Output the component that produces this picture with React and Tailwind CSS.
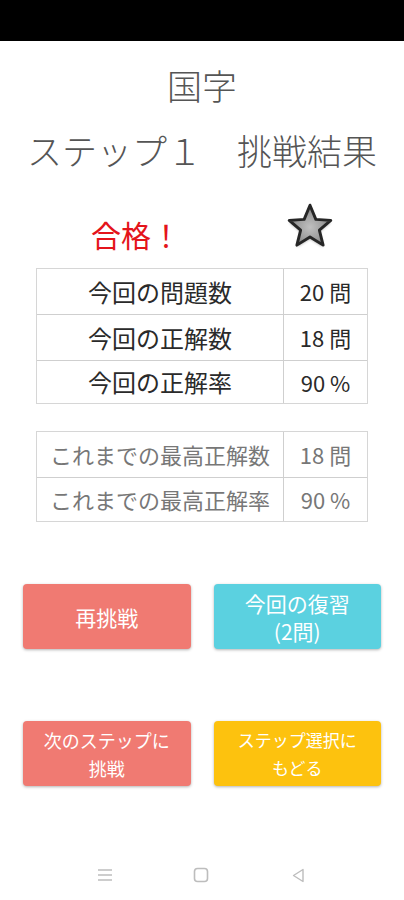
import React from 'react';

const font = { fontFamily: '"Noto Sans CJK JP", "Noto Sans", sans-serif' };

const Star = () => (
  <svg width="52" height="50" viewBox="0 0 50 48">
    <defs>
      <radialGradient id="sg" cx="50%" cy="55%" r="55%">
        <stop offset="0%" stopColor="#c0c0c0" />
        <stop offset="60%" stopColor="#9c9c9c" />
        <stop offset="100%" stopColor="#707070" />
      </radialGradient>
      <filter id="sh" x="-20%" y="-20%" width="140%" height="140%">
        <feGaussianBlur stdDeviation="1.3" />
      </filter>
    </defs>
    <path
      d="M25 4 L30.6 17.6 L45 18.6 L34 28 L37.6 42.4 L25 34.6 L12.4 42.4 L16 28 L5 18.6 L19.4 17.6 Z"
      fill="#000"
      opacity="0.4"
      filter="url(#sh)"
      transform="translate(0 1.5)"
    />
    <path
      d="M25 4 L30.6 17.6 L45 18.6 L34 28 L37.6 42.4 L25 34.6 L12.4 42.4 L16 28 L5 18.6 L19.4 17.6 Z"
      fill="url(#sg)"
      stroke="#262626"
      strokeWidth="2.8"
      strokeLinejoin="round"
    />
  </svg>
);

const Row = ({ label, value, h, last }) => (
  <div className={`flex ${h} ${last ? '' : 'border-b border-[#cfcfcf]'}`}>
    <div className="w-[247px] flex items-center justify-center border-r border-[#cfcfcf]">{label}</div>
    <div className="flex-1 flex items-center justify-center text-[22px]">{value}</div>
  </div>
);

const Btn = ({ color, size, children }) => (
  <div
    className={`w-[168px] h-[65px] rounded-[4px] ${color} shadow-[0_1px_3px_rgba(0,0,0,0.3)] flex flex-col items-center justify-center text-white ${size}`}
  >
    {children}
  </div>
);

export default function App() {
  return (
    <div className="w-[404px] h-[900px] bg-white flex flex-col overflow-hidden" style={font}>
      <div className="h-[41px] bg-black" />

      <div className="mt-[26px] text-center text-[35px] leading-none font-light text-[#555]">国字</div>
      <div className="mt-[30px] text-center text-[35px] leading-none font-light text-[#555]">
        ステップ１　挑戦結果
      </div>

      <div className="mt-[34px] flex items-center h-[50px]">
        <div className="ml-[91px] text-[30px] leading-none text-[#e4141b] pt-[16px]">合格！</div>
        <div className="ml-[103px]">
          <Star />
        </div>
      </div>

      <div className="mt-[17px] mx-[36px] border border-[#d6d6d6] text-[24px] text-[#2a2a2a]">
        <Row label="今回の問題数" value="20 問" h="h-[46px]" />
        <Row label="今回の正解数" value="18 問" h="h-[46px]" />
        <Row label="今回の正解率" value="90 %" h="h-[42px]" last />
      </div>

      <div className="mt-[27px] mx-[36px] border border-[#d6d6d6] text-[22px] text-[#777]">
        <Row label="これまでの最高正解数" value="18 問" h="h-[46px]" />
        <Row label="これまでの最高正解率" value="90 %" h="h-[43px]" last />
      </div>

      <div className="mt-[62px] flex gap-[23px] px-[23px]">
        <Btn color="bg-[#f07a72]" size="text-[21px] leading-[30px]">再挑戦</Btn>
        <Btn color="bg-[#5bd1e0]" size="text-[21px] leading-[28px]">
          <span>今回の復習</span>
          <span>(2問)</span>
        </Btn>
      </div>

      <div className="mt-[72px] flex gap-[23px] px-[23px]">
        <Btn color="bg-[#f07a72]" size="text-[18px] leading-[28px]">
          <span>次のステップに</span>
          <span>挑戦</span>
        </Btn>
        <Btn color="bg-[#fdc20e]" size="text-[17px] leading-[28px]">
          <span>ステップ選択に</span>
          <span>もどる</span>
        </Btn>
      </div>

      <div className="mt-auto mb-[17px] flex items-center h-[16px]">
        <svg className="ml-[98px]" width="14" height="14" viewBox="0 0 14 14">
          <path d="M0 2H14M0 7H14M0 12H14" stroke="#bdbdbd" strokeWidth="1.6" />
        </svg>
        <svg className="ml-[81px]" width="16" height="16" viewBox="0 0 16 16">
          <rect x="1.5" y="1.5" width="13" height="13" rx="3" fill="none" stroke="#bdbdbd" strokeWidth="1.6" />
        </svg>
        <svg className="ml-[83px]" width="12" height="15" viewBox="0 0 12 15">
          <path d="M11 1.5 L1.5 7.5 L11 13.5 Z" fill="none" stroke="#bdbdbd" strokeWidth="1.4" strokeLinejoin="round" />
        </svg>
      </div>
    </div>
  );
}
